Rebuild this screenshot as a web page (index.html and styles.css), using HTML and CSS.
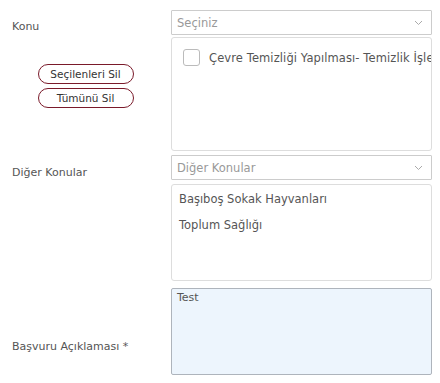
FILE: index.html
```html
<!DOCTYPE html>
<html lang="tr">
<head>
<meta charset="utf-8">
<link rel="stylesheet" href="styles.css">
</head>
<body>
<div class="form">
  <div class="row row-konu">
    <div class="label">Konu</div>
    <div class="ctrl">
      <div class="select"><span class="ph">Seçiniz</span>
        <svg class="chev" width="9" height="6" viewBox="0 0 9 6"><polyline points="1,1 4.5,4.5 8,1" fill="none" stroke="#aaa" stroke-width="1"/></svg>
      </div>
    </div>
  </div>
  <div class="row row-list1">
    <div class="label btns">
      <button class="pill">Seçilenleri Sil</button>
      <button class="pill">Tümünü Sil</button>
    </div>
    <div class="ctrl">
      <div class="listbox list1">
        <div class="check-item"><span class="box"></span><span class="item-text">Çevre Temizliği Yapılması- Temizlik İşleri</span></div>
      </div>
    </div>
  </div>
  <div class="row row-diger">
    <div class="label">Diğer Konular</div>
    <div class="ctrl">
      <div class="select"><span class="ph">Diğer Konular</span>
        <svg class="chev" width="9" height="6" viewBox="0 0 9 6"><polyline points="1,1 4.5,4.5 8,1" fill="none" stroke="#aaa" stroke-width="1"/></svg>
      </div>
    </div>
  </div>
  <div class="row row-list2">
    <div class="label"></div>
    <div class="ctrl">
      <div class="listbox list2">
        <div class="opt">Başıboş Sokak Hayvanları</div>
        <div class="opt">Toplum Sağlığı</div>
      </div>
    </div>
  </div>
  <div class="row row-desc">
    <div class="label label-desc">Başvuru Açıklaması *</div>
    <div class="ctrl">
      <div class="textarea">Test</div>
    </div>
  </div>
</div>
</body>
</html>
```
FILE: styles.css
```css
* { box-sizing: border-box; }
html, body { margin: 0; padding: 0; background: #fff; }
body {
  font-family: "DejaVu Sans", Verdana, sans-serif;
  font-size: 11px;
  color: #555;
  width: 440px;
}
.form { padding-top: 10px; }
.row { display: flex; }
.label {
  width: 171px;
  padding-left: 12px;
  flex: none;
  color: #555;
}
.ctrl { width: 261px; flex: none; }

.row-konu .label { padding-top: 10px; }
.select {
  height: 25px;
  border: 1px solid #ccc;
  display: flex;
  align-items: center;
  justify-content: space-between;
  padding: 0 8px 0 5px;
  border-radius: 1px;
  font-size: 11.5px;
}
.ph { color: #999; }
.chev { display: block; }

.row-list1 { margin-top: 2px; }
.btns {
  display: flex;
  flex-direction: column;
  align-items: center;
  gap: 4px;
  padding-left: 0;
  padding-top: 27px;
}
.pill {
  width: 96px;
  height: 20px;
  border: 1px solid #7a1a2a;
  border-radius: 10px;
  background: #fff;
  font-family: "DejaVu Sans", Verdana, sans-serif;
  font-size: 10.5px;
  color: #333;
  padding: 0;
  line-height: 18px;
}
.listbox {
  border: 1px solid #ddd;
  border-radius: 3px;
  overflow: hidden;
  white-space: nowrap;
  font-size: 11.5px;
}
.list1 { height: 114px; padding: 11px 0 0 11px; }
.check-item { display: flex; align-items: center; gap: 9px; }
.box {
  width: 17px; height: 17px;
  border: 1px solid #bbb;
  border-radius: 3px;
  flex: none;
}
.item-text { color: #555; letter-spacing: 0.1px; }

.row-diger { margin-top: 4px; }
.row-diger .label { padding-top: 11px; }
.row-list2 { margin-top: 4px; }
.list2 { height: 97px; padding: 6px 0 0 7px; }
.opt { height: 26px; line-height: 16px; color: #555; }

.row-desc { margin-top: 7px; }
.label-desc { padding-top: 52px; }
.textarea {
  height: 87px;
  border: 1px solid #aeb4bc;
  border-radius: 2px;
  background: #edf5fd;
  padding: 2px 5px;
  color: #555;
}
```
